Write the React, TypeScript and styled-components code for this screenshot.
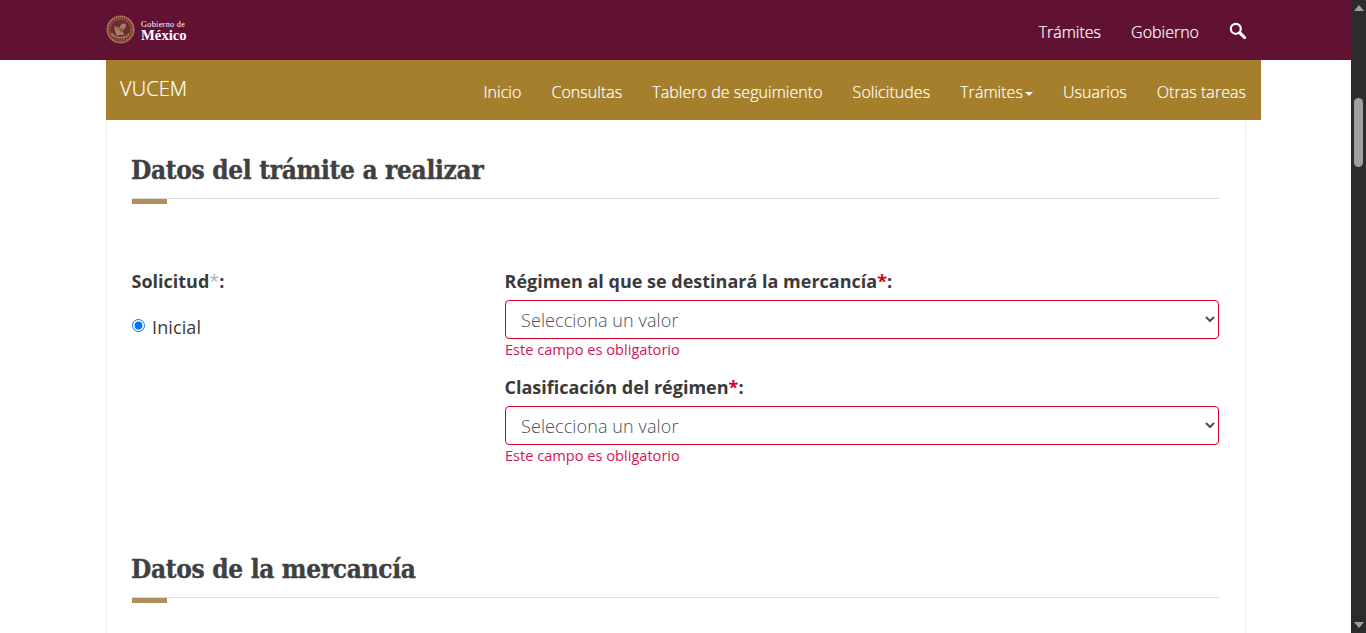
import React from "react";
import styled, { createGlobalStyle } from "styled-components";

const Global = createGlobalStyle`
  html, body { margin: 0; padding: 0; height: 633px; overflow: hidden; background: #fff; }
  body { font-family: "Open Sans", "Liberation Sans", sans-serif; color: #333; }
  * { box-sizing: border-box; }
`;

const Shell = styled.div`display: flex; width: 1366px; height: 633px; overflow: hidden;`;
const Page = styled.div`width: 1351px; flex: none; display: flex; flex-direction: column;`;

const TopBar = styled.header`
  height: 60px; flex: none; background: #611232;
  display: flex; align-items: center; justify-content: space-between;
  padding: 0 105px 0 106px;
`;
const Logo = styled.div`display: flex; align-items: center; gap: 6px; margin-top: -1px;`;
const LogoText = styled.div`
  display: flex; flex-direction: column; color: #fff; padding-top: 2px;
  font-family: "Liberation Serif", serif; font-weight: 700;
`;
const LogoSmall = styled.span`font-size: 8.2px; line-height: 8px; letter-spacing: .32px; font-weight: 400;`;
const LogoBig = styled.span`font-size: 14.7px; line-height: 12px;`;
const TopLinks = styled.nav`
  display: flex; align-items: center; gap: 30px; color: #fff; font-size: 16px; font-weight: 300; margin-top: 3px;
  -webkit-text-stroke: 0.2px #fff;
`;
const SearchBtn = styled.span`display: flex; width: 17px; height: 17px; margin-top: -3px;`;

const SubBar = styled.div`
  margin: 0 90px 0 106px; width: 1155px; height: 60px; flex: none; background: #a57f2c;
  display: flex; justify-content: space-between; color: #fff; padding: 0 15px 0 14px;
`;
const Brand = styled.span`font-size: 20px; font-weight: 300; line-height: 58px; letter-spacing: .1px; -webkit-text-stroke: 0.2px #fff;`;
const SubLinks = styled.nav`
  display: flex; gap: 30px; font-size: 16px; font-weight: 300; line-height: 64px; letter-spacing: .04px;
  -webkit-text-stroke: 0.2px #fff;
`;
const Caret = styled.i`
  display: inline-block; width: 0; height: 0; margin-left: 2px; vertical-align: middle;
  border-top: 4px solid #fff; border-left: 4px solid transparent; border-right: 4px solid transparent;
`;

const Panel = styled.main`
  margin-left: 106px; width: 1140px; flex: 1; overflow: hidden;
  border-left: 1px solid #eee; border-right: 1px solid #eee;
  padding: 0 25px 0 25px;
`;
const Section = styled.section`padding-top: ${(p: { $top: number }) => p.$top}px;`;
const Title = styled.h2`
  margin: 0 0 0 -1px; height: 32px; font-family: "DejaVu Serif", serif; font-stretch: condensed; font-weight: 700;
  font-size: 26px; line-height: 32px; color: #404041; letter-spacing: -0.32px; white-space: nowrap;
  -webkit-text-stroke: 0.35px #404041;
`;
const Rule = styled.div`
  position: relative; margin-top: 12px; height: 1px; width: 1088px; background: #ddd;
  &::after { content: ""; position: absolute; left: 0; top: 1px; width: 35px; height: 5px; background: #b38e5d; }
`;
const Form = styled.div`display: grid; grid-template-columns: 373px 715px; margin-top: 70px;`;
const Label = styled.label`display: block; font-size: 18px; font-weight: 700; line-height: 24px; color: #3a3a3a; margin-left: -0.5px;`;
const Star = styled.span`color: ${(p: { $red?: boolean }) => (p.$red ? "#d0021b" : "#888")}; font-weight: ${(p: { $red?: boolean }) => (p.$red ? 700 : 300)};`;
const RadioRow = styled.div`display: flex; align-items: center; margin-top: 22px; font-size: 18px; font-weight: 400; line-height: 24px; color: #3a3a3a; letter-spacing: .1px;`;
const Radio = styled.input`margin: 0 7px 0 0; width: 13px; height: 13px; position: relative; top: -2px;`;
const Field = styled.div`margin-bottom: 16px;`;
const Select = styled.select`
  display: block; width: 714px; height: 39px; margin-top: 7px; padding: 0 11px;
  border: 1px solid #d9002b; border-radius: 4px; background: #fff;
  font-family: "Open Sans", sans-serif; font-size: 18px; font-weight: 300; color: #495057; letter-spacing: .1px;
`;
const Err = styled.div`font-size: 14.6px; font-weight: 400; line-height: 20px; color: #d4145a;`;

const Scrollbar = styled.aside`
  width: 15px; flex: none; background: #2c2c2c; display: flex; flex-direction: column; align-items: center;
  padding: 5px 0;
`;
const Arrow = styled.i`
  width: 0; height: 0; border-left: 5px solid transparent; border-right: 5px solid transparent;
  ${(p: { $up?: boolean }) => p.$up ? "border-bottom: 6px solid #9f9f9f;" : "border-top: 6px solid #9f9f9f; margin-top: auto;"}
`;
const Thumb = styled.div`width: 9px; height: 69px; border-radius: 5px; background: #9f9f9f; margin-top: 87px;`;

const Emblem = () => (
  <svg width="29" height="29" viewBox="0 0 30 30" aria-hidden="true">
    <circle cx="15" cy="15" r="14" fill="#7d3a3a" />
    <circle cx="15" cy="15" r="13.6" fill="none" stroke="#b38e5d" strokeWidth="1.8" strokeDasharray="1.4 .7" />
    <circle cx="15" cy="15" r="10.8" fill="#6d2a35" stroke="#9a7350" strokeWidth="1" strokeDasharray="2 1" />
    <path d="M9 11c2 2 4 1 5 2 1-3 3-5 6-4 1 1 1 3 0 4-1 2-3 2-3 4 1 2 2 3 2 4-3-1-5-1-8 1 0-3-3-6-2-11z" fill="#a5835c" />
    <path d="M10 13l4 3m-1-5l3 6m1-4l-2 5" stroke="#6d3a35" strokeWidth=".8" fill="none" />
    <path d="M6 19c3 6 15 6 18 0" fill="none" stroke="#b8946a" strokeWidth="1.5" strokeDasharray="2 .6" />
  </svg>
);

export default function App() {
  return (
    <Shell>
      <Global />
      <Page>
        <TopBar>
          <Logo>
            <Emblem />
            <LogoText>
              <LogoSmall>Gobierno de</LogoSmall>
              <LogoBig>México</LogoBig>
            </LogoText>
          </Logo>
          <TopLinks>
            <span>Trámites</span>
            <span>Gobierno</span>
            <SearchBtn>
              <svg viewBox="0 0 17 17" width="17" height="17" aria-hidden="true">
                <circle cx="6.8" cy="6.8" r="5" fill="none" stroke="#fff" strokeWidth="2.2" />
                <path d="M10.6 10.6l5 5" stroke="#fff" strokeWidth="3" strokeLinecap="round" />
              </svg>
            </SearchBtn>
          </TopLinks>
        </TopBar>
        <SubBar>
          <Brand>VUCEM</Brand>
          <SubLinks>
            <span>Inicio</span>
            <span>Consultas</span>
            <span>Tablero de seguimiento</span>
            <span>Solicitudes</span>
            <span>Trámites<Caret /></span>
            <span>Usuarios</span>
            <span>Otras tareas</span>
          </SubLinks>
        </SubBar>
        <Panel>
          <Section $top={34}>
            <Title>Datos del trámite a realizar</Title>
            <Rule />
            <Form>
              <div>
                <Label>Solicitud<Star>*</Star>:</Label>
                <RadioRow>
                  <Radio type="radio" defaultChecked name="sol" />
                  <span>Inicial</span>
                </RadioRow>
              </div>
              <div>
                <Field>
                  <Label>Régimen al que se destinará la mercancía<Star $red>*</Star>:</Label>
                  <Select defaultValue=""><option value="">Selecciona un valor</option></Select>
                  <Err>Este campo es obligatorio</Err>
                </Field>
                <Field>
                  <Label>Clasificación del régimen<Star $red>*</Star>:</Label>
                  <Select defaultValue=""><option value="">Selecciona un valor</option></Select>
                  <Err>Este campo es obligatorio</Err>
                </Field>
              </div>
            </Form>
          </Section>
          <Section $top={72}>
            <Title>Datos de la mercancía</Title>
            <Rule />
          </Section>
        </Panel>
      </Page>
      <Scrollbar>
        <Arrow $up />
        <Thumb />
        <Arrow />
      </Scrollbar>
    </Shell>
  );
}
